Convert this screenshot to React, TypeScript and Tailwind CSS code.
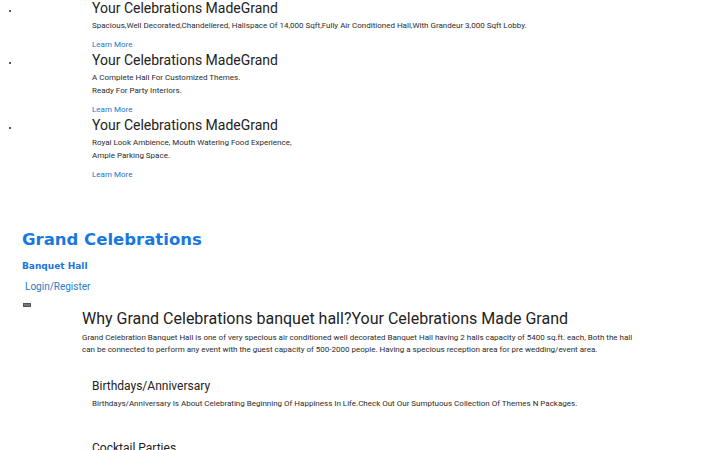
import React from "react";

const roboto = { fontFamily: "Roboto, 'Liberation Sans', sans-serif" };

const slides = [
  {
    lines: [
      "Spacious,Well Decorated,Chandeliered, Hallspace Of 14,000 Sqft,Fully Air Conditioned Hall,With Grandeur 3,000 Sqft Lobby.",
    ],
  },
  { lines: ["A Complete Hall For Customized Themes.", "Ready For Party Interiors."] },
  { lines: ["Royal Look Ambience, Mouth Watering Food Experience,", "Ample Parking Space."] },
];

export default function App() {
  return (
    <div className="w-[720px] h-[450px] overflow-hidden bg-white" style={roboto}>
      <ul className="list-disc pl-[20px] m-0 text-[8px] text-[#222]">
        {slides.map((s, i) => (
          <li key={i} className="pb-[1px]">
            <div className="ml-[72px]">
              <h3 className="text-[14px] leading-[16px] text-[#222] font-normal">Your Celebrations MadeGrand</h3>
              <p className="mt-[3px] text-[8px] leading-[13px] text-[#2b2b2b]">
                {s.lines.map((l, j) => (
                  <React.Fragment key={j}>
                    {l}
                    {j < s.lines.length - 1 && <br />}
                  </React.Fragment>
                ))}
              </p>
              <a className="block mt-[7px] text-[8px] leading-[12px] text-[#1f74c8]">Learn More</a>
            </div>
          </li>
        ))}
      </ul>

      <div className="pl-[22px] pt-[48px]" style={{ fontFamily: "'DejaVu Sans', Verdana, sans-serif" }}>
        <h1 className="text-[16.5px] leading-[20px] font-bold text-[#1877e0]">Grand Celebrations</h1>
        <h2 className="mt-[10px] text-[9px] leading-[12px] font-bold text-[#1877e0]">Banquet Hall</h2>
      </div>
      <div className="pl-[25px] mt-[8px] text-[10px] leading-[14px]">
        <a className="text-[10px] leading-[14px] text-[#2a7ac9]">Login/Register</a>
      </div>
      <div className="pl-[23px] mt-[9px]">
        <button className="block w-[8px] h-[4px] bg-[#777] border border-[#555]"></button>
      </div>

      <div className="pl-[82px] mt-[2px] w-[645px]">
        <h2 className="text-[16px] leading-[20px] text-[#222] font-normal">
          Why Grand Celebrations banquet hall?Your Celebrations Made Grand
        </h2>
        <p className="mt-[3px] text-[8px] leading-[12px] text-[#2b2b2b]">
          Grand Celebration Banquet Hall is one of very specious air conditioned well decorated Banquet Hall having 2 halls capacity of 5400 sq.ft. each, Both the hall can be connected to perform any event with the guest capacity of 500-2000 people. Having a specious reception area for pre wedding/event area.
        </p>
        <div className="pl-[10px] mt-[22px]">
          <h3 className="text-[12px] leading-[16px] text-[#222]">Birthdays/Anniversary</h3>
          <p className="mt-[4px] text-[8px] leading-[12px] text-[#2b2b2b]">
            Birthdays/Anniversary Is About Celebrating Beginning Of Happiness In Life.Check Out Our Sumptuous Collection Of Themes N Packages.
          </p>
          <h3 className="mt-[30px] text-[12px] leading-[16px] text-[#222]">Cocktail Parties</h3>
        </div>
      </div>
    </div>
  );
}
